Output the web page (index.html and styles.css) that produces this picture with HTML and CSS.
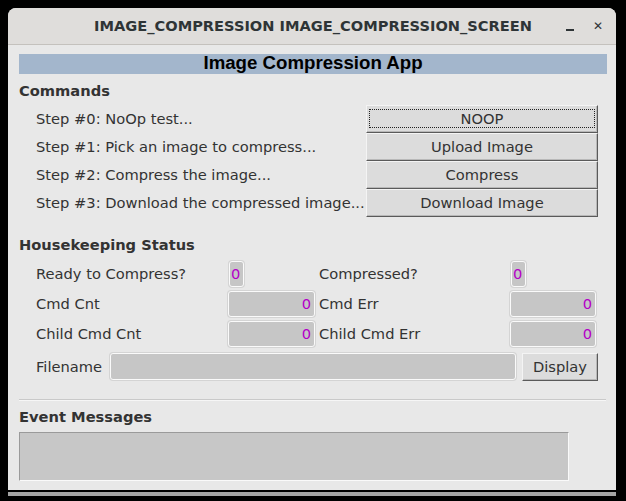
FILE: index.html
```html
<!DOCTYPE html>
<html>
<head>
<meta charset="utf-8">
<link rel="stylesheet" href="styles.css">
</head>
<body>
<div class="window">
  <div class="titlebar">
    <span class="title">IMAGE_COMPRESSION IMAGE_COMPRESSION_SCREEN</span>
    <span class="win-btn min"></span>
    <span class="win-btn close">✕</span>
  </div>
  <div class="content">
    <div class="banner">Image Compression App</div>
    <div class="section-title">Commands</div>
    <div class="cmd-grid">
      <div class="label">Step #0: NoOp test...</div>
      <button class="btn focus"><span>NOOP</span></button>
      <div class="label">Step #1: Pick an image to compress...</div>
      <button class="btn"><span>Upload Image</span></button>
      <div class="label">Step #2: Compress the image...</div>
      <button class="btn"><span>Compress</span></button>
      <div class="label">Step #3: Download the compressed image...</div>
      <button class="btn"><span>Download Image</span></button>
    </div>
    <div class="section-title hk-title">Housekeeping Status</div>
    <div class="hk-grid">
      <div class="label">Ready to Compress?</div>
      <div class="field small">0</div>
      <div class="label">Compressed?</div>
      <div class="field small">0</div>
      <div class="label">Cmd Cnt</div>
      <div class="field">0</div>
      <div class="label">Cmd Err</div>
      <div class="field">0</div>
      <div class="label">Child Cmd Cnt</div>
      <div class="field">0</div>
      <div class="label">Child Cmd Err</div>
      <div class="field">0</div>
    </div>
    <div class="file-row">
      <div class="label">Filename</div>
      <div class="field wide"></div>
      <button class="btn display">Display</button>
    </div>
    <div class="sep"></div>
    <div class="section-title ev-title">Event Messages</div>
    <div class="events"></div>
  </div>
</div>
<div class="shadow"></div>
</body>
</html>
```

FILE: styles.css
```css
html, body {
  margin: 0;
  padding: 0;
  background: #000;
  width: 626px;
  height: 501px;
  overflow: hidden;
  font-family: "DejaVu Sans", sans-serif;
}

.window {
  margin: 8px 0 0 8px;
  width: 608px;
  height: 482px;
  background: #e8e8e8;
  border-radius: 8px 8px 0 0;
  display: flex;
  flex-direction: column;
  overflow: hidden;
}

.titlebar {
  height: 36px;
  flex: none;
  background: #dfdddb;
  border-bottom: 1px solid #c4c1bd;
  position: relative;
  display: flex;
  align-items: center;
  justify-content: center;
}

.title {
  font-weight: bold;
  font-size: 14.6px;
  color: #2e3436;
  margin-left: 2px;
  padding-bottom: 1px;
}

.win-btn {
  position: absolute;
  color: #2e3436;
  font-weight: bold;
}

.min {
  left: 558px;
  top: 21px;
  width: 8px;
  height: 2px;
  background: #2e3436;
}

.close {
  left: 585px;
  top: 0;
  height: 36px;
  line-height: 36px;
  font-size: 12px;
}

.content {
  padding: 9px 9px 0 11px;
  display: flex;
  flex-direction: column;
}

.banner {
  height: 20px;
  background: #a3b6cc;
  font-family: "Liberation Sans", Arial, sans-serif;
  font-weight: bold;
  font-size: 18.67px;
  line-height: 18px;
  text-align: center;
  color: #000;
}

.section-title {
  font-weight: bold;
  font-size: 14.67px;
  color: #333;
  height: 18px;
  line-height: 17px;
  margin-top: 8px;
}

.label {
  font-size: 14.67px;
  color: #333;
  display: flex;
  align-items: center;
  white-space: nowrap;
  padding-bottom: 2px;
}

.cmd-grid {
  margin-top: 5px;
  padding-left: 17px;
  display: grid;
  grid-template-columns: 330px 232px;
  grid-auto-rows: 28px;
}

.btn {
  margin: 0;
  padding: 0 0 1px 0;
  font-family: "DejaVu Sans", sans-serif;
  font-size: 14.67px;
  color: #333;
  background: #dcdcdc;
  border: 1px solid;
  border-color: #f4f4f4 #5a5a5a #5a5a5a #f4f4f4;
  box-shadow: inset -1px -1px 0 #b8b8b8;
  display: flex;
  align-items: center;
  justify-content: center;
}

.btn.focus span {
  flex: 1;
  align-self: stretch;
  margin: 3px 2px 3px 2px;
  border: 1px dotted #222;
  display: flex;
  align-items: center;
  justify-content: center;
}

.hk-title {
  margin-top: 19px;
}

.hk-grid {
  margin-top: 7px;
  padding-left: 17px;
  display: grid;
  grid-template-columns: 192px 87px 195px 86px;
  column-gap: 0;
  grid-auto-rows: 26px;
  row-gap: 4px;
}

.hk-grid .label:nth-child(4n+3) {
  padding-left: 4px;
}

.field {
  background: #c6c6c6;
  border: 1px solid #fafafa;
  border-radius: 3px;
  box-shadow: 0 0 0 1px #d4d4d4;
  color: #b400c8;
  font-size: 14.67px;
  display: flex;
  align-items: center;
  justify-content: flex-end;
  padding: 0 3px 2px 0;
  box-sizing: border-box;
}

.field.small {
  width: 15px;
  margin-left: 1px;
  justify-content: flex-start;
  padding: 0 0 2px 1px;
}

.file-row {
  margin-top: 6px;
  padding-left: 17px;
  display: flex;
  height: 28px;
}

.file-row .label {
  width: 74px;
}

.field.wide {
  width: 406px;
  height: 27px;
}

.btn.display {
  margin-left: 6px;
  width: 76px;
  height: 28px;
}

.sep {
  margin-top: 18px;
  height: 1px;
  background: #c9c9c9;
  border-bottom: 1px solid #f6f6f6;
  margin-right: 1px;
}

.ev-title {
  margin-top: 7px;
}

.events {
  margin-top: 6px;
  width: 550px;
  height: 49px;
  box-sizing: border-box;
  background: #c7c7c7;
  border: 1px solid;
  border-color: #9a9a9a #fafafa #fafafa #9a9a9a;
}

.shadow {
  margin: 2px 0 0 8px;
  width: 608px;
  height: 4px;
  background: #a4a4a4;
}
```
